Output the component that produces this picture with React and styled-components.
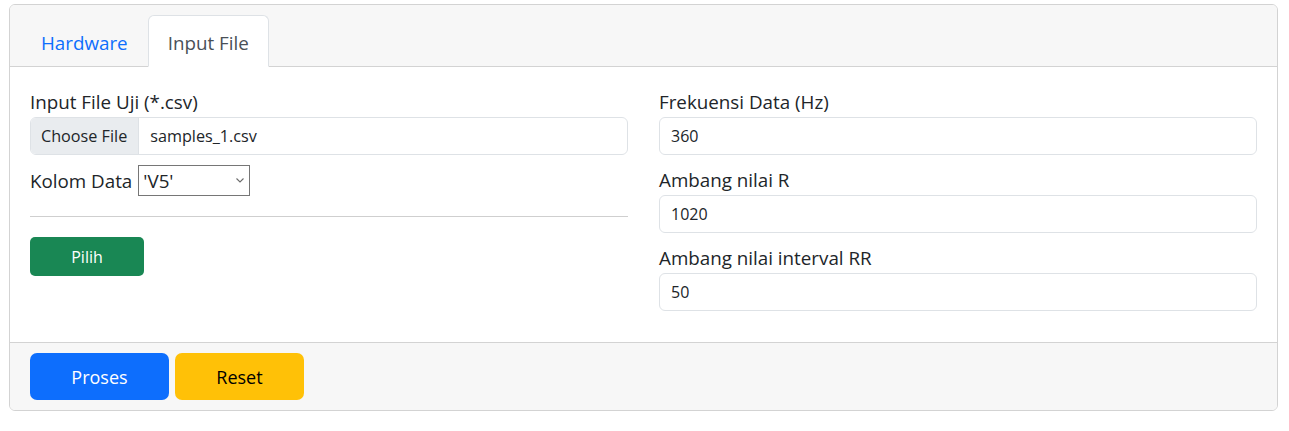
import React from "react";
import styled, { createGlobalStyle } from "styled-components";

const GlobalStyle = createGlobalStyle`
  * {
    box-sizing: border-box;
  }
  body {
    margin: 0;
    background: #fff;
    color: #212529;
    font-family: "Open Sans", "Noto Sans", sans-serif;
  }
`;

const Page = styled.div`
  padding: 4px 11px 0 9px;
`;

const Card = styled.div`
  border: 1px solid #d3d3d3;
  border-radius: 6px;
  background: #fff;
  overflow: hidden;
`;

const CardHeader = styled.div`
  background: #f7f7f7;
  border-bottom: 1px solid #d3d3d3;
  padding: 10px 11px 0 11px;
`;

const Tabs = styled.ul`
  display: flex;
  gap: 0;
  list-style: none;
  margin: 0 0 -1px 0;
  padding: 0;
`;

const Tab = styled.li`
  padding: 15px 19px 11px;
  font-size: 18.8px;
  line-height: 24px;
  border: 1px solid ${(p) => (p.$active ? "#dee2e6" : "transparent")};
  border-bottom-color: ${(p) => (p.$active ? "#fff" : "transparent")};
  border-radius: 6px 6px 0 0;
  background: ${(p) => (p.$active ? "#fff" : "transparent")};
  color: ${(p) => (p.$active ? "#495057" : "#0d6efd")};
  cursor: pointer;
`;

const CardBody = styled.div`
  display: grid;
  grid-template-columns: 1fr 1fr;
  column-gap: 31px;
  padding: 23px 20px 31px;
`;

const Column = styled.div`
  display: flex;
  flex-direction: column;
`;

const Group = styled.div`
  display: flex;
  flex-direction: column;
  margin-bottom: ${(p) => p.$gap || 0}px;
`;

const Label = styled.label`
  display: block;
  font-size: 18.8px;
  line-height: 24px;
  margin-bottom: 3px;
`;

const TextInput = styled.input`
  height: 38px;
  width: 100%;
  padding: 0 11px;
  border: 1px solid #dee2e6;
  border-radius: 6px;
  font-family: inherit;
  font-size: 16px;
  color: #212529;
  background: #fff;
  outline: none;
`;

const FileBox = styled.div`
  display: flex;
  height: 38px;
  border: 1px solid #dee2e6;
  border-radius: 6px;
  overflow: hidden;
  font-size: 16.2px;
`;

const FileButton = styled.div`
  display: flex;
  align-items: center;
  padding: 0 11px 0 10px;
  background: #e9ecef;
  border-right: 1px solid #dee2e6;
`;

const FileName = styled.div`
  display: flex;
  align-items: center;
  padding: 0 11px;
`;

const InlineRow = styled.div`
  display: flex;
  align-items: center;
  gap: 6px;
  margin-top: 10px;
`;

const InlineLabel = styled.span`
  font-size: 18.8px;
  line-height: 24px;
`;

const SelectWrap = styled.div`
  position: relative;
  width: 112px;
  height: 31px;
`;

const Select = styled.select`
  appearance: none;
  width: 100%;
  height: 100%;
  padding: 0 4px;
  border: 1px solid #767676;
  border-radius: 0;
  background: #fff;
  font-family: inherit;
  font-size: 18.8px;
  color: #212529;
  outline: none;
`;

const Chevron = styled.svg`
  position: absolute;
  right: 6px;
  top: 13px;
  pointer-events: none;
`;

const Divider = styled.hr`
  border: 0;
  border-top: 1px solid #cfcfcf;
  margin: 20px 0;
`;

const Button = styled.button`
  width: ${(p) => p.$width}px;
  height: ${(p) => p.$height}px;
  border: 0;
  border-radius: ${(p) => p.$radius || 5}px;
  background: ${(p) => p.$bg};
  color: ${(p) => p.$color || "#fff"};
  font-family: inherit;
  font-size: ${(p) => p.$size || 16}px;
  cursor: pointer;
`;

const CardFooter = styled.div`
  display: flex;
  gap: 6px;
  background: #f7f7f7;
  border-top: 1px solid #d3d3d3;
  padding: 10px 20px 10px;
`;

const fields = [
  { label: "Frekuensi Data (Hz)", value: "360" },
  { label: "Ambang nilai R", value: "1020" },
  { label: "Ambang nilai interval RR", value: "50" },
];

export default function App() {
  return (
    <>
      <GlobalStyle />
      <Page>
        <Card>
          <CardHeader>
            <Tabs>
              <Tab>Hardware</Tab>
              <Tab $active>Input File</Tab>
            </Tabs>
          </CardHeader>
          <CardBody>
            <Column>
              <Group>
                <Label>Input File Uji (*.csv)</Label>
                <FileBox>
                  <FileButton>Choose File</FileButton>
                  <FileName>samples_1.csv</FileName>
                </FileBox>
              </Group>
              <InlineRow>
                <InlineLabel>Kolom Data</InlineLabel>
                <SelectWrap>
                  <Select defaultValue="V5">
                    <option value="V5">'V5'</option>
                  </Select>
                  <Chevron width="8" height="5" viewBox="0 0 8 5">
                    <path d="M0.5 0.5 L4 4 L7.5 0.5" fill="none" stroke="#6d6d6d" strokeWidth="1.1" />
                  </Chevron>
                </SelectWrap>
              </InlineRow>
              <Divider />
              <div>
                <Button $width={114} $height={39} $bg="#198754">
                  Pilih
                </Button>
              </div>
            </Column>
            <Column>
              {fields.map((f, i) => (
                <Group key={f.label} $gap={i < fields.length - 1 ? 13 : 0}>
                  <Label>{f.label}</Label>
                  <TextInput defaultValue={f.value} />
                </Group>
              ))}
            </Column>
          </CardBody>
          <CardFooter>
            <Button $width={139} $height={47} $radius={7} $bg="#0d6efd" $size={18}>
              Proses
            </Button>
            <Button $width={129} $height={47} $radius={7} $bg="#ffc107" $color="#000" $size={18}>
              Reset
            </Button>
          </CardFooter>
        </Card>
      </Page>
    </>
  );
}
